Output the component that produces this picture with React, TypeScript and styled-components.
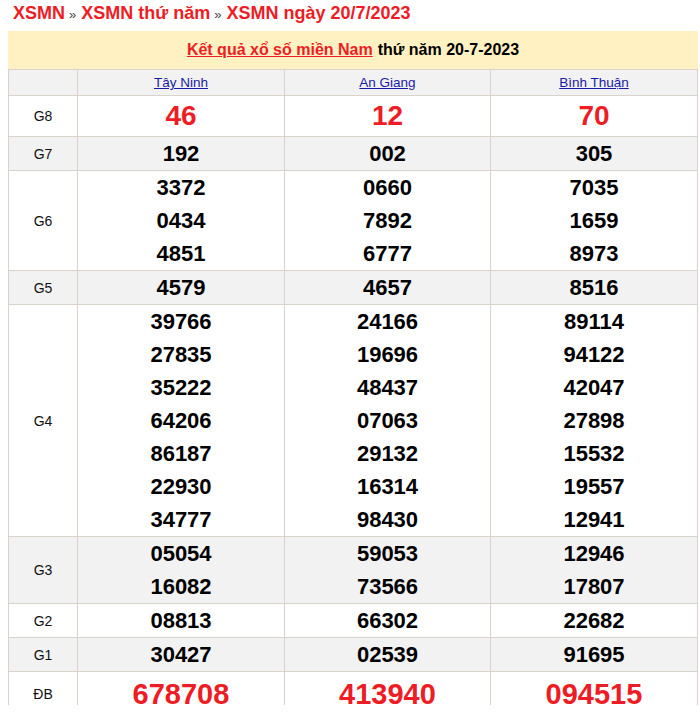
import React from "react";
import styled, { createGlobalStyle } from "styled-components";

const Global = createGlobalStyle`
  html, body { margin: 0; padding: 0; background: #fff; }
  body { font-family: "Liberation Sans", Arial, sans-serif; }
`;

const Page = styled.div`
  height: 705px;
  overflow: hidden;
  padding: 0 8px;
  box-sizing: border-box;
  width: 700px;
`;

const Breadcrumb = styled.div`
  height: 31px;
  line-height: 27px;
  padding-left: 5px;
  font-size: 18px;
  font-weight: bold;
  color: #ee1c25;
  white-space: nowrap;
`;

const Sep = styled.span`
  font-size: 13px;
  color: #444;
  font-weight: normal;
  padding: 0 5px 0 4px;
`;

const TitleBar = styled.div`
  width: 690px;
  height: 38px;
  background: #fff1c1;
  display: flex;
  align-items: center;
  justify-content: center;
  font-size: 16px;
  font-weight: bold;
  color: #000;
`;

const TitleLink = styled.a`
  color: #ee1c25;
  text-decoration: underline;
  margin-right: 5px;
`;

const Table = styled.div`
  width: 690px;
  border-left: 1px solid #d9d3cb;
  box-sizing: border-box;
`;

const Row = styled.div<{ $alt?: boolean; $top?: boolean }>`
  display: grid;
  grid-template-columns: 69px 207px 206px 207px;
  background: ${(p) => (p.$alt ? "#f2f2f2" : "#fff")};
  border-top: ${(p) => (p.$top ? "1px solid #d9d3cb" : "none")};
`;

const Cell = styled.div`
  border-right: 1px solid #d9d3cb;
  border-bottom: 1px solid #d9d3cb;
  display: flex;
  flex-direction: column;
  align-items: center;
  justify-content: center;
  box-sizing: border-box;
`;

const Label = styled(Cell)`
  font-size: 14px;
  color: #111;
`;

const HeadCell = styled(Cell)`
  height: 26px;
  font-size: 13.5px;
`;

const Province = styled.a`
  color: #1a1aa8;
  text-decoration: underline;
`;

const Num = styled.div<{ $size: "normal" | "big" | "special" }>`
  font-weight: bold;
  font-size: ${(p) => (p.$size === "normal" ? "22px" : p.$size === "big" ? "28px" : "29px")};
  line-height: ${(p) => (p.$size === "normal" ? "33px" : p.$size === "big" ? "40px" : "44px")};
  color: ${(p) => (p.$size === "normal" ? "#000" : "#ee1c25")};
`;

type Prize = { label: string; values: string[][]; size: "normal" | "big" | "special" };

const prizes: Prize[] = [
  { label: "G8", size: "big", values: [["46"], ["12"], ["70"]] },
  { label: "G7", size: "normal", values: [["192"], ["002"], ["305"]] },
  {
    label: "G6",
    size: "normal",
    values: [
      ["3372", "0434", "4851"],
      ["0660", "7892", "6777"],
      ["7035", "1659", "8973"],
    ],
  },
  { label: "G5", size: "normal", values: [["4579"], ["4657"], ["8516"]] },
  {
    label: "G4",
    size: "normal",
    values: [
      ["39766", "27835", "35222", "64206", "86187", "22930", "34777"],
      ["24166", "19696", "48437", "07063", "29132", "16314", "98430"],
      ["89114", "94122", "42047", "27898", "15532", "19557", "12941"],
    ],
  },
  {
    label: "G3",
    size: "normal",
    values: [
      ["05054", "16082"],
      ["59053", "73566"],
      ["12946", "17807"],
    ],
  },
  { label: "G2", size: "normal", values: [["08813"], ["66302"], ["22682"]] },
  { label: "G1", size: "normal", values: [["30427"], ["02539"], ["91695"]] },
  { label: "ĐB", size: "special", values: [["678708"], ["413940"], ["094515"]] },
];

const provinces = ["Tây Ninh", "An Giang", "Bình Thuận"];

export default function App() {
  return (
    <>
      <Global />
      <Page>
        <Breadcrumb>
          XSMN<Sep>»</Sep>XSMN thứ năm<Sep>»</Sep>XSMN ngày 20/7/2023
        </Breadcrumb>
        <TitleBar>
          <TitleLink href="#">Kết quả xổ số miền Nam</TitleLink>
          thứ năm 20-7-2023
        </TitleBar>
        <Table>
          <Row $alt $top>
            <HeadCell />
            {provinces.map((p) => (
              <HeadCell key={p}>
                <Province href="#">{p}</Province>
              </HeadCell>
            ))}
          </Row>
          {prizes.map((prize, i) => (
            <Row key={prize.label} $alt={i % 2 === 1}>
              <Label>{prize.label}</Label>
              {prize.values.map((col, j) => (
                <Cell key={j}>
                  {col.map((v) => (
                    <Num key={v} $size={prize.size}>
                      {v}
                    </Num>
                  ))}
                </Cell>
              ))}
            </Row>
          ))}
        </Table>
      </Page>
    </>
  );
}
